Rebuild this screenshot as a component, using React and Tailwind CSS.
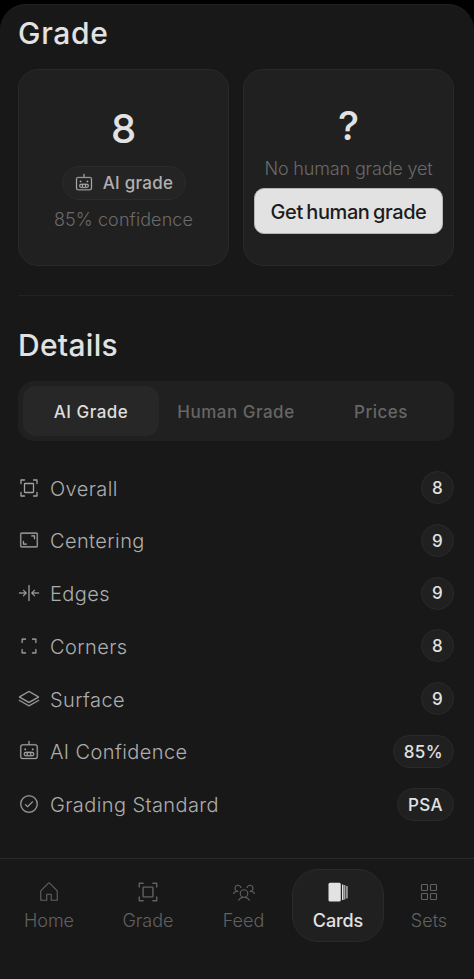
import {
    PiArrowsInLineHorizontalLight,
    PiCheckCircleLight,
    PiCornersOutLight,
    PiFrameCornersLight,
    PiHouseLight,
    PiRobotLight,
    PiSquaresFourLight,
    PiStackSimpleLight,
    PiUsersThreeLight,
} from "react-icons/pi";

function ScanIcon({ className }) {
    return (
        <svg viewBox="0 0 22 22" fill="none" stroke="currentColor" strokeWidth="1.3" strokeLinecap="round" strokeLinejoin="round" className={className}>
            <path d="M3 6.500v-3.500h3.500M15.500 3h3.500v3.500M19 15.500v3.500h-3.500M6.500 19h-3.500v-3.500" />
            <rect x="6.500" y="6.500" width="9" height="9" rx="0.500" />
        </svg>
    );
}

function CardsIcon({ className }) {
    return (
        <svg viewBox="0 0 24 24" fill="currentColor" className={className}>
            <rect x="2.500" y="2.800" width="12.300" height="18.600" rx="1.500" />
            <rect x="16" y="4.500" width="1.500" height="15.500" rx="0.500" />
            <rect x="18.300" y="5" width="1" height="14.500" rx="0.500" />
            <rect x="20.400" y="6" width="1.100" height="12.500" rx="0.500" />
        </svg>
    );
}

const rows = [
    { label: "Overall", value: "8", icon: ScanIcon },
    { label: "Centering", value: "9", icon: PiFrameCornersLight },
    { label: "Edges", value: "9", icon: PiArrowsInLineHorizontalLight },
    { label: "Corners", value: "8", icon: PiCornersOutLight },
    { label: "Surface", value: "9", icon: PiStackSimpleLight },
    { label: "AI Confidence", value: "85%", icon: PiRobotLight },
    { label: "Grading Standard", value: "PSA", icon: PiCheckCircleLight },
];

const tabs = [
    { label: "AI Grade", className: "w-[136px] bg-[#272727] text-[#dedede]" },
    { label: "Human Grade", className: "w-[154px] text-[#666666]" },
    { label: "Prices", className: "flex-1 text-[#666666]" },
];

const navItems = [
    { label: "Home", icon: PiHouseLight, className: "w-[98px]" },
    { label: "Grade", icon: ScanIcon, className: "w-[100px]" },
    { label: "Feed", icon: PiUsersThreeLight, className: "w-[91px]" },
    { label: "Cards", icon: CardsIcon, active: true, className: "w-[92px] ml-[3px] mr-[2px]" },
    { label: "Sets", icon: PiSquaresFourLight, className: "w-[86px]" },
];

export default function App() {
    return (
        <div className="w-[474px] h-[979px] bg-black pt-1 overflow-hidden font-['Inter',sans-serif]">
            <div className="h-[975px] rounded-t-[26px] border-t border-[#222222] bg-[#181818] flex flex-col">
                <main className="h-[853px] shrink-0 pl-[18px] pr-[20px]">
                    <h1 className="pt-[9px] text-[30px] leading-[38px] tracking-[0.7px] font-medium text-[#e2e2e2]">
                        Grade
                    </h1>
                    <div className="mt-[17px] grid grid-cols-2 gap-[14px]">
                        <div className="h-[197px] rounded-[20px] border border-[#292929] bg-[#202020] flex flex-col items-center">
                            <p className="mt-[35px] text-[40px] leading-[48px] font-medium text-[#e2e2e2]">8</p>
                            <div className="mt-[13px] h-[34px] w-[124px] rounded-full border border-[#2b2b2b] bg-[#242424] flex items-center justify-center gap-[9px] text-[#b0b0b0]">
                                <PiRobotLight strokeWidth={3} className="size-5" />
                                <span className="pt-[2px] text-[17px] font-medium tracking-[0.25px]">AI grade</span>
                            </div>
                            <p className="mt-[8px] text-[18px] leading-[24px] font-light tracking-[0.1px] text-[#6a6a6a]">
                                85% confidence
                            </p>
                        </div>
                        <div className="h-[197px] rounded-[20px] border border-[#292929] bg-[#202020] flex flex-col items-center">
                            <p className="mt-[32px] text-[40px] leading-[48px] font-medium text-[#e2e2e2]">?</p>
                            <p className="mt-[7px] text-[18px] leading-[24px] font-light tracking-[-0.15px] text-[#6a6a6a]">
                                No human grade yet
                            </p>
                            <button className="mt-[7px] h-[46px] w-[189px] rounded-[10px] border border-[#b5b5b5] bg-[#e2e2e2] pt-[2px] text-[20px] font-medium tracking-[-0.4px] [word-spacing:-1.5px] whitespace-nowrap text-[#1c1c1c]">
                                Get human grade
                            </button>
                        </div>
                    </div>
                    <hr className="mt-[29px] border-[#222222]" />
                    <h2 className="mt-[30px] text-[30px] leading-[38px] tracking-[0.3px] font-medium text-[#e2e2e2]">
                        Details
                    </h2>
                    <div className="mt-[17px] h-[60px] rounded-[16px] bg-[#202020] p-[5px] flex">
                        {tabs.map((tab) => (
                            <button
                                key={tab.label}
                                className={`rounded-[13px] pt-[3px] text-[17px] font-medium tracking-[0.5px] ${tab.className}`}
                            >
                                {tab.label}
                            </button>
                        ))}
                    </div>
                    <ul className="mt-[30px] flex flex-col gap-[19.800px]">
                        {rows.map(({ label, value, icon: Icon }) => (
                            <li key={label} className="h-[33px] flex items-center">
                                <Icon strokeWidth={Icon === ScanIcon ? undefined : 3} className="size-[22px] text-[#a2a2a2]" />
                                <span className="ml-[10px] pt-[2px] text-[20px] font-light tracking-[0.4px] text-[#adadad]">
                                    {label}
                                </span>
                                <span className="ml-auto h-[33px] min-w-[33px] px-[10px] pt-[2px] rounded-full border border-[#2a2a2a] bg-[#202020] flex items-center justify-center text-[17px] font-medium tracking-[0.4px] text-[#e2e2e2]">
                                    {value}
                                </span>
                            </li>
                        ))}
                    </ul>
                </main>
                <nav className="h-[120px] border-t border-[#2a2a2a] pt-[10px] flex items-start">
                    {navItems.map(({ label, icon: Icon, active, className }) => (
                        <a
                            key={label}
                            className={`h-[73px] flex flex-col items-center rounded-[26px] border pt-[10px] ${className} ${
                                active
                                    ? "border-[#2a2a2a] bg-[#202020] text-[#e2e2e2] font-medium tracking-[-0.1px]"
                                    : "border-transparent text-[#616161] font-light"
                            }`}
                        >
                            <Icon className="size-[24px]" />
                            <span className="mt-[4px] text-[18px] leading-[26px]">{label}</span>
                        </a>
                    ))}
                </nav>
            </div>
        </div>
    );
}
